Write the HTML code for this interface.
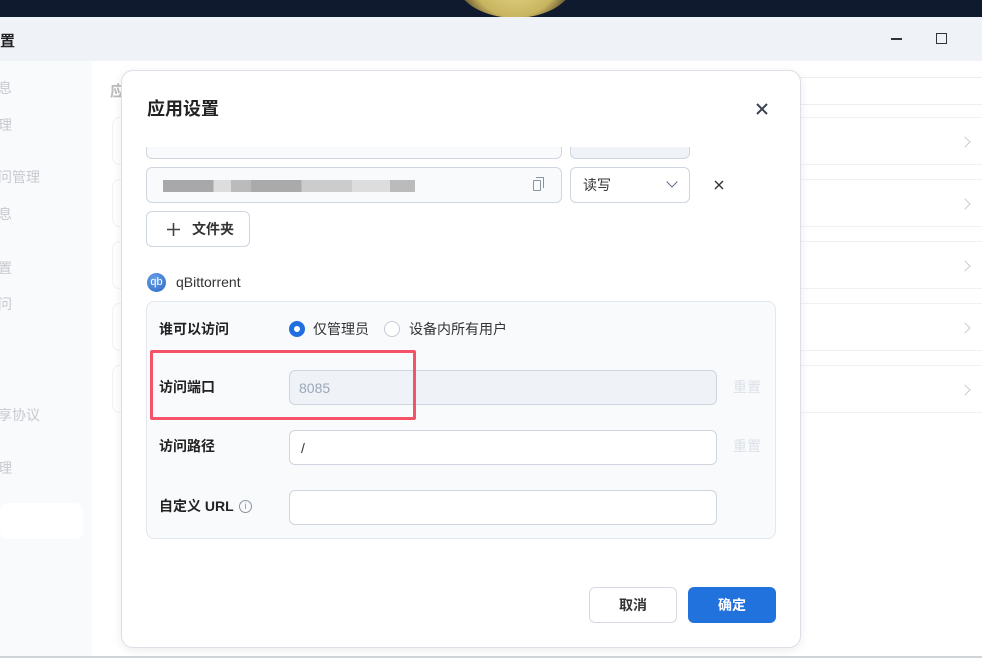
<!DOCTYPE html>
<html><head><meta charset="utf-8">
<style>
*{box-sizing:border-box;margin:0;padding:0}
body{width:982px;height:658px;overflow:hidden;position:relative;background:#fff;font-family:"Liberation Sans","Noto Sans CJK SC",sans-serif;color:#222}
.abs{position:absolute}
.top{left:0;top:0;width:982px;height:17px;background:#0f1a2e;overflow:hidden}
.moon{left:455px;top:-60px;width:120px;height:78px;border-radius:50%;background:radial-gradient(circle at 50% 40%,#f1e39a,#c9b560 60%,#5a4b2a 80%,#0f1a2e 100%)}
.titlebar{left:0;top:17px;width:982px;height:44px;background:#eff3f8}
.side{left:0;top:61px;width:92px;height:597px;background:#f9fafc}
.main{left:92px;top:61px;width:890px;height:597px;background:#fff;border-top-left-radius:14px}
.side span{position:absolute;left:-2px;font-size:14px;color:#c6c9cf}
.row{position:absolute;left:112px;width:880px;height:48px;border:1px solid #f0f1f4;border-radius:8px;background:#fff}
.chev{position:absolute;left:961px;width:8px;height:8px;border-right:1.5px solid #c8cbd1;border-top:1.5px solid #c8cbd1;transform:rotate(45deg)}
.modal{left:121px;top:70px;width:680px;height:578px;background:#fff;border:1px solid #dcdfe5;border-radius:12px;box-shadow:0 2px 10px rgba(0,0,0,.08)}
.inp{position:absolute;border:1px solid #cfd6e0;border-radius:6px;background:#fff}
.lbl{position:absolute;font-size:14px;line-height:20px;font-weight:bold;color:#222}
.t{position:absolute;font-size:14px;line-height:20px;color:#333}
</style></head><body>
<div class="abs top"><div class="abs moon"></div></div>
<div class="abs titlebar">
 <div class="abs" style="left:0;top:13px;font-size:15px;color:#222;font-weight:bold">置</div>
 <div class="abs" style="left:891px;top:21px;width:11px;height:2px;background:#333"></div>
 <div class="abs" style="left:936px;top:16px;width:11px;height:11px;border:1.5px solid #333"></div>
</div>
<div class="abs side">
 <span style="top:17px">息</span><span style="top:54px">理</span><span style="top:106px">问管理</span><span style="top:143px">息</span><span style="top:197px">置</span><span style="top:233px">问</span><span style="top:344px">享协议</span><span style="top:397px">理</span>
 <div class="abs" style="left:0;top:442px;width:83px;height:36px;background:#fff;border-radius:8px"></div>
</div>
<div class="abs main"></div>
<div class="abs" style="left:110px;top:80px;font-size:15px;color:#bbb;font-weight:bold">应</div>
<div class="abs" style="left:800px;top:77px;width:182px;height:1px;background:#eceef2"></div>
<div class="abs" style="left:800px;top:104px;width:182px;height:1px;background:#eceef2"></div>
<div class="row" style="top:117px"></div><div class="row" style="top:179px"></div><div class="row" style="top:241px"></div><div class="row" style="top:303px"></div><div class="row" style="top:365px"></div>
<div class="chev" style="top:138px"></div><div class="chev" style="top:200px"></div><div class="chev" style="top:262px"></div><div class="chev" style="top:324px"></div><div class="chev" style="top:386px"></div>

<div class="abs modal">
 <div class="abs" style="left:25px;top:26px;font-size:18px;line-height:24px;font-weight:bold;color:#222">应用设置</div>
 <svg class="abs" style="left:633px;top:31px" width="14" height="14" viewBox="0 0 14 14"><path d="M2 2L12 12M12 2L2 12" stroke="#3a4150" stroke-width="2"/></svg>
 <div class="abs" style="left:0;top:76px;width:678px;height:400px;overflow:hidden">
  <div class="inp" style="left:24px;top:-24px;width:416px;height:36px;background:#f9fafc"></div>
  <div class="inp" style="left:448px;top:-24px;width:120px;height:36px;background:#eff3f8"></div>
 </div>
 <div class="inp" style="left:24px;top:96px;width:416px;height:36px;background:#f9fafc">
  <div class="abs" style="left:16px;top:12px;width:252px;height:12px;background:linear-gradient(90deg,#a8a8ab 0 20%,#ddd 20% 27%,#bbb 27% 35%,#aaa 35% 55%,#ccc 55% 75%,#ddd 75% 90%,#bbb 90%)"></div>
  <div class="abs" style="left:386px;top:12px;width:8px;height:11px;border:1.5px solid #8a93a3;border-radius:1px"></div>
  <div class="abs" style="left:389px;top:9px;width:8px;height:11px;border-top:1.5px solid #8a93a3;border-right:1.5px solid #8a93a3"></div>
 </div>
 <div class="inp" style="left:448px;top:96px;width:120px;height:36px">
  <div class="t" style="left:12px;top:7px">读写</div>
  <div class="abs" style="left:97px;top:10px;width:8px;height:8px;border-right:1.5px solid #5a6c8a;border-bottom:1.5px solid #5a6c8a;transform:rotate(45deg)"></div>
 </div>
 <svg class="abs" style="left:592px;top:109px" width="10" height="10" viewBox="0 0 10 10"><path d="M1 1L9 9M9 1L1 9" stroke="#333" stroke-width="1.4"/></svg>
 <div class="inp" style="left:24px;top:140px;width:104px;height:36px">
  <svg class="abs" style="left:20px;top:11px" width="13" height="13" viewBox="0 0 13 13"><path d="M6.5 0V13M0 6.5H13" stroke="#444" stroke-width="1.6"/></svg>
  <div class="lbl" style="left:45px;top:7px;color:#333">文件夹</div>
 </div>
 <div class="abs" style="left:25px;top:202px;width:19px;height:19px;border-radius:50%;background:radial-gradient(circle at 40% 35%,#6aa2e8,#2a67c6);color:#fff;font-size:11px;text-align:center;line-height:18px">qb</div>
 <div class="t" style="left:54px;top:201px">qBittorrent</div>
 <div class="abs" style="left:24px;top:230px;width:630px;height:238px;background:#f9fafc;border:1px solid #e3e7ee;border-radius:8px">
  <div class="lbl" style="left:12px;top:17px">谁可以访问</div>
  <div class="abs" style="left:142px;top:19px;width:16px;height:16px;border-radius:50%;background:#1f6fde"><div class="abs" style="left:5px;top:5px;width:6px;height:6px;border-radius:50%;background:#fff"></div></div>
  <div class="t" style="left:166px;top:17px">仅管理员</div>
  <div class="abs" style="left:237px;top:19px;width:16px;height:16px;border-radius:50%;border:1px solid #c5ccd6;background:#fff"></div>
  <div class="t" style="left:262px;top:17px">设备内所有用户</div>
  <div class="lbl" style="left:12px;top:75px">访问端口</div>
  <div class="inp" style="left:142px;top:68px;width:428px;height:35px;background:#eff3f8"><div class="t" style="left:9px;top:7px;color:#9aa6b8">8085</div></div>
  <div class="t" style="left:586px;top:75px;color:#dde1e7">重置</div>
  <div class="lbl" style="left:12px;top:134px">访问路径</div>
  <div class="inp" style="left:142px;top:128px;width:428px;height:35px"><div class="t" style="left:11px;top:7px">/</div></div>
  <div class="t" style="left:586px;top:134px;color:#dde1e7">重置</div>
  <div class="lbl" style="left:12px;top:194px">自定义 URL</div>
  <div class="abs" style="left:92px;top:198px;width:13px;height:13px;border-radius:50%;border:1px solid #8a93a3;font-size:9px;color:#8a93a3;text-align:center;line-height:11px">i</div>
  <div class="inp" style="left:142px;top:188px;width:428px;height:35px"></div>
 </div>
 <div class="abs" style="left:467px;top:516px;width:88px;height:36px;border:1px solid #d5dae2;border-radius:6px;font-size:14px;font-weight:bold;color:#333;text-align:center;line-height:34px">取消</div>
 <div class="abs" style="left:566px;top:516px;width:88px;height:36px;background:#2272de;border-radius:6px;font-size:14px;font-weight:bold;color:#fff;text-align:center;line-height:36px">确定</div>
</div>
<div class="abs" style="left:150px;top:350px;width:266px;height:70px;border:3px solid #f4536a;border-radius:2px"></div>
<div class="abs" style="left:0;top:656px;width:982px;height:2px;background:#d0d3d8"></div>
</body></html>
